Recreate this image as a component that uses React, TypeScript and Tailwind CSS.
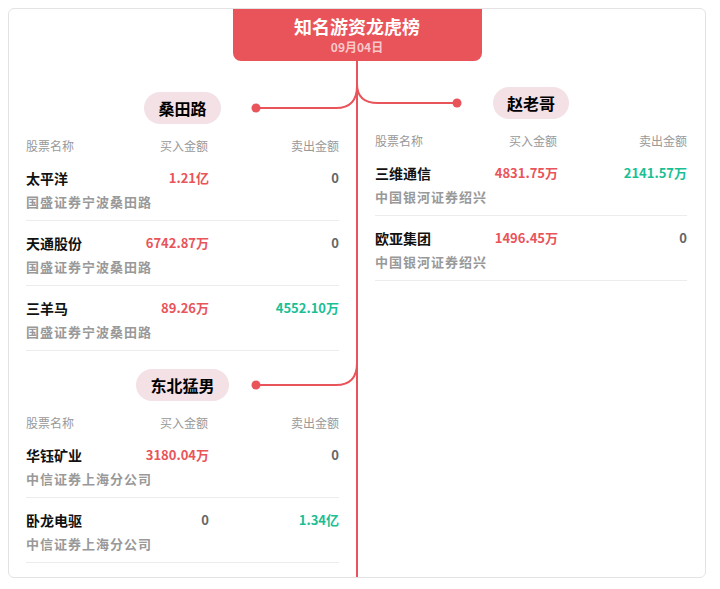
import React from "react";

type Row = { name: string; buy: string; sell: string; broker: string };

const F = { fontFamily: '"Noto Sans CJK SC", "Noto Sans", sans-serif' };

function Section({ name, rows, mt }: { name: string; rows: Row[]; mt: string }) {
  return (
    <div className={mt}>
      <div className="flex justify-center">
        <div className="h-[32px] px-[14px] rounded-full bg-[#f3e1e6] flex items-center text-[16px] font-bold text-black">{name}</div>
      </div>
      <div className="mt-3 flex h-[20px] items-center text-[12px] text-[#999]">
        <div className="w-[100px]">股票名称</div>
        <div className="w-[82px] text-right">买入金额</div>
        <div className="flex-1 text-right">卖出金额</div>
      </div>
      {rows.map((r, i) => (
        <div key={i} className="pt-3 pb-2 border-b border-[#ececec]">
          <div className="flex h-5 items-center text-[13px] font-bold">
            <div className="w-[100px] text-[#111] text-[14px]">{r.name}</div>
            <div className={"w-[83px] text-right " + (r.buy === "0" ? "text-[#666]" : "text-[#e9545a]")}>{r.buy}</div>
            <div className={"flex-1 text-right " + (r.sell === "0" ? "text-[#666]" : "text-[#1bbf95]")}>{r.sell}</div>
          </div>
          <div className="mt-1 h-5 flex items-center text-[13px] tracking-[1px] font-bold text-[#999]">{r.broker}</div>
        </div>
      ))}
    </div>
  );
}

export default function App() {
  const b1 = "国盛证券宁波桑田路";
  const b2 = "中信证券上海分公司";
  const b3 = "中国银河证券绍兴";
  return (
    <div className="w-[720px] h-[589px] bg-white pt-2 px-2" style={F}>
      <div className="relative w-[698px] h-[570px] border border-[#e3e3e3] rounded-md overflow-hidden">
        <svg className="absolute left-0 top-0" width="698" height="570" viewBox="0 0 698 570">
          <g transform="translate(-9,-9)" stroke="#e9545a" strokeWidth="2" fill="none">
            <line x1="357" y1="60" x2="357" y2="580" />
            <path d="M256 108 H336 Q357 108 357 86" />
            <path d="M357 84 Q357 103 378 103 H457" />
            <path d="M256 385 H336 Q357 385 357 363" />
          </g>
          <g transform="translate(-9,-9)" fill="#e9545a">
            <circle cx="256" cy="108" r="4.5" />
            <circle cx="457" cy="103" r="4.5" />
            <circle cx="256" cy="385" r="4.5" />
          </g>
        </svg>
        <div className="relative flex justify-center">
          <div className="w-[249px] h-[53px] -mt-px bg-[#e9545a] rounded-b-lg flex flex-col items-center justify-center">
            <div className="text-[18px] font-bold text-white leading-[24px]">知名游资龙虎榜</div>
            <div className="text-[12px] font-bold text-[#f8c9cb] leading-[18px]">09月04日</div>
          </div>
        </div>
        <div className="relative flex px-[17px] gap-[36px]">
          <div className="w-[313px]">
            <Section
              name="桑田路"
              mt="mt-[31px]"
              rows={[
                { name: "太平洋", buy: "1.21亿", sell: "0", broker: b1 },
                { name: "天通股份", buy: "6742.87万", sell: "0", broker: b1 },
                { name: "三羊马", buy: "89.26万", sell: "4552.10万", broker: b1 },
              ]}
            />
            <Section
              name="东北猛男"
              mt="mt-[18px]"
              rows={[
                { name: "华钰矿业", buy: "3180.04万", sell: "0", broker: b2 },
                { name: "卧龙电驱", buy: "0", sell: "1.34亿", broker: b2 },
              ]}
            />
          </div>
          <div className="w-[312px]">
            <Section
              name="赵老哥"
              mt="mt-[26px]"
              rows={[
                { name: "三维通信", buy: "4831.75万", sell: "2141.57万", broker: b3 },
                { name: "欧亚集团", buy: "1496.45万", sell: "0", broker: b3 },
              ]}
            />
          </div>
        </div>
      </div>
    </div>
  );
}
